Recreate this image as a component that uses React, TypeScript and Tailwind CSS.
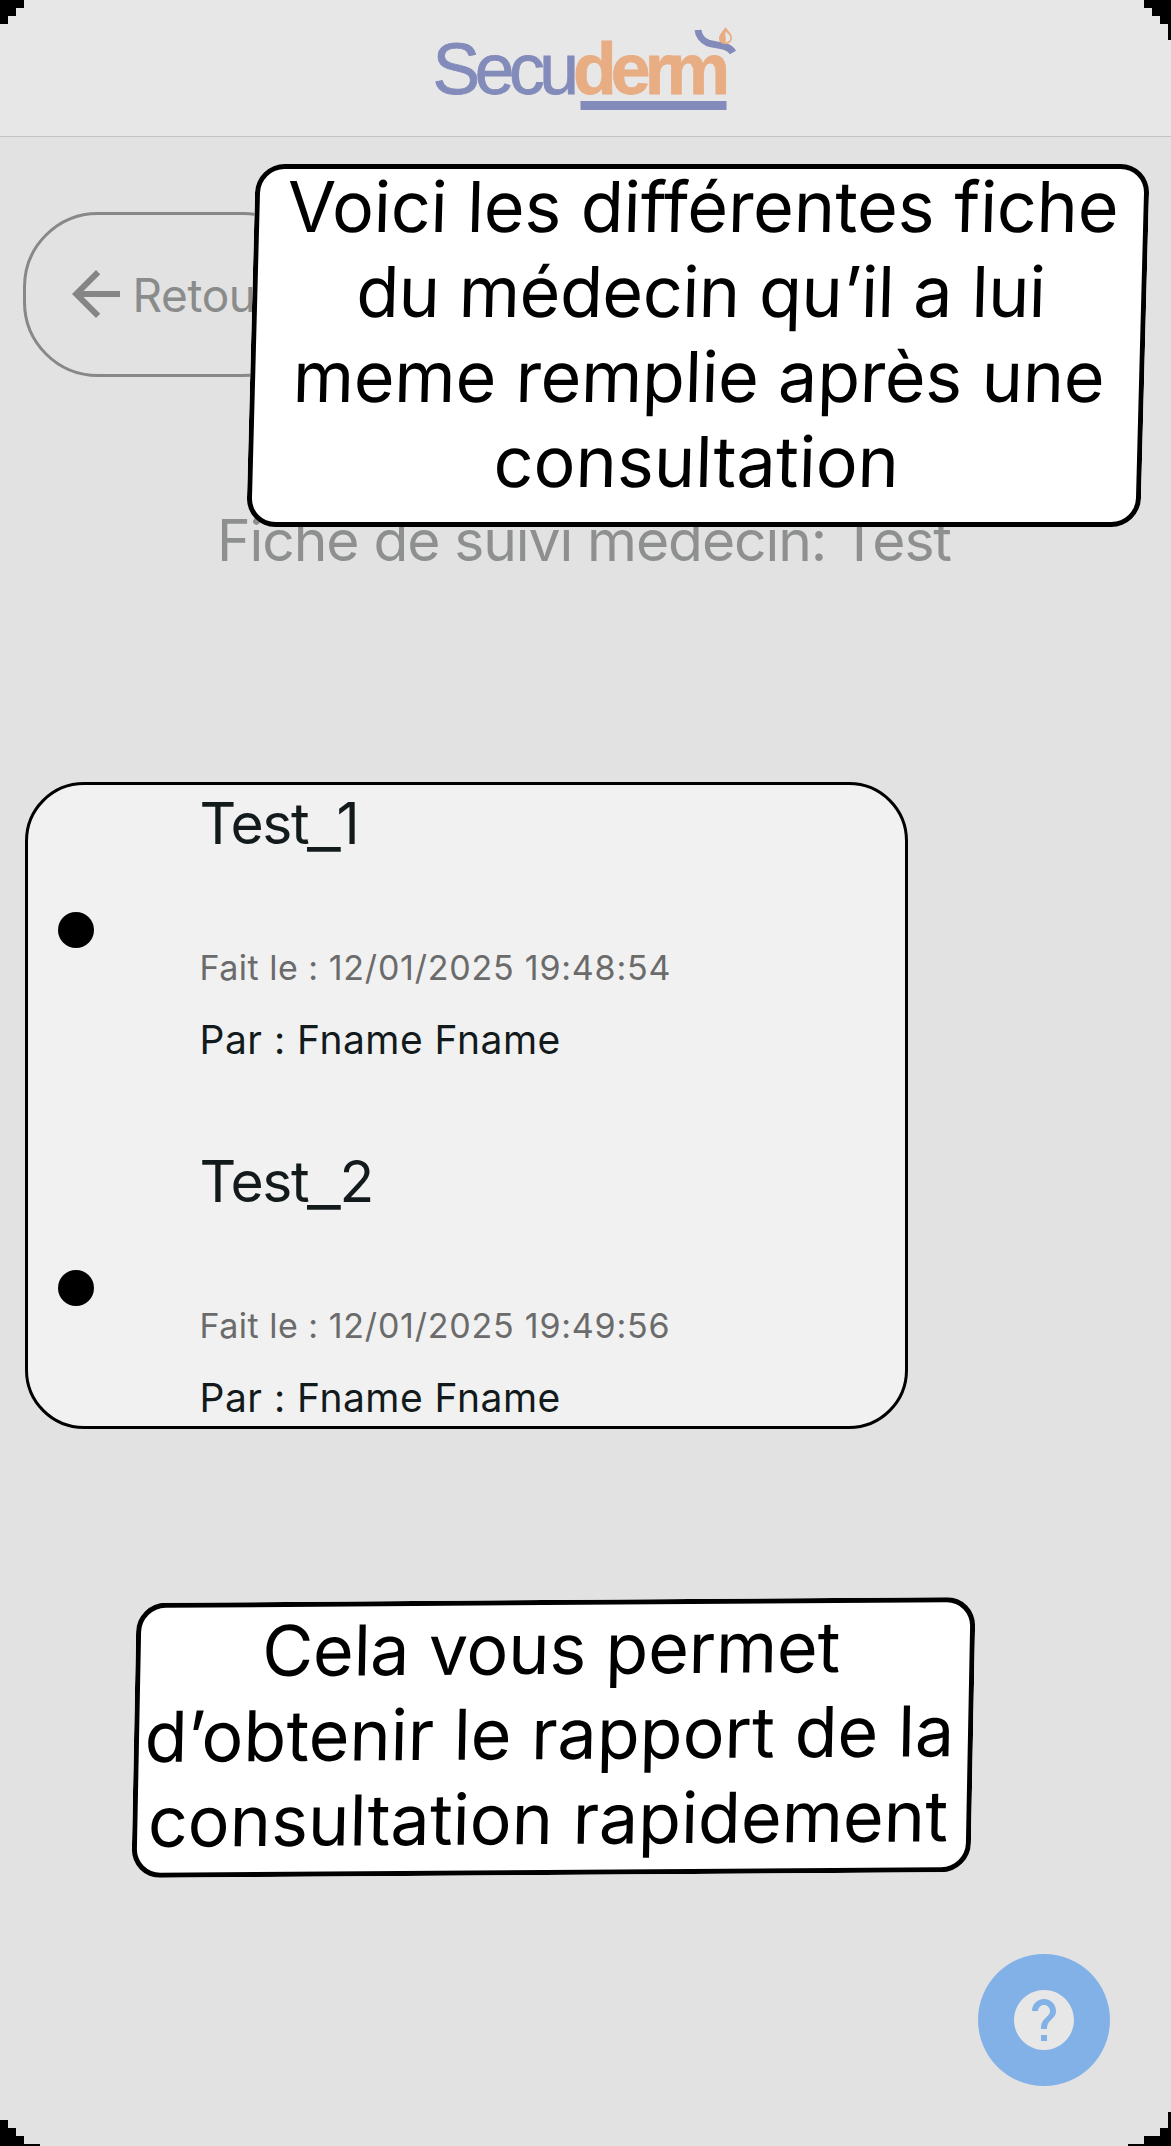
import { MdArrowBack, MdHelp } from "react-icons/md";

type Report = { id: number; idClass: string; date: string; author: string };

const reports: Report[] = [
  { id: 1, idClass: "-ml-[3px]", date: "12/01/2025 19:48:54", author: "Fname Fname" },
  { id: 2, idClass: "ml-0", date: "12/01/2025 19:49:56", author: "Fname Fname" },
];

function Logo() {
  return (
    <svg viewBox="0 0 320 96" className="h-[96px] w-[320px]" role="img" aria-label="Secuderm">
      <g fontFamily="'Liberation Sans', Arial, sans-serif" fontSize="71.5">
        <text x="6.5" y="74.7" fill="#838bba" stroke="#838bba" strokeWidth="0.8" letterSpacing="-5.500">
          Secu
        </text>
        <text x="147" y="74.7" fill="#e8ad83" stroke="#e8ad83" strokeWidth="0.8" fontWeight="700" letterSpacing="-5.900">
          derm
        </text>
      </g>
      <rect x="154.500" y="82" width="146" height="9" fill="#838bba" />
      <path
        d="M272 11C272.500 16 276 21.500 282 24C290 27 302 25 307 33.500"
        fill="none"
        stroke="#838bba"
        strokeWidth="7"
      />
      <path
        d="M299.500 8C296.500 13 292.700 15.500 293 20C293.300 24 297 25 299.500 25C304 25 306 22 306 18.500C306 15 302 12 299.500 8Z"
        fill="#e8ad83"
      />
      <path d="M300 12.500C298 17 301 18 299.500 23.500C303 23 304.500 21 304.300 18.500C304 16 301.500 14.500 300 12.500Z" fill="#e7e7e7" />
    </svg>
  );
}

function ReportItem({ report }: { report: Report }) {
  return (
    <li className="flex h-[279px] items-start">
      <span className="mt-[127px] ml-[30px] size-9 shrink-0 rounded-full bg-black" />
      <div className="ml-[105.500px] whitespace-nowrap text-[#131a1c]">
        <h2 className="mt-[5px] flex h-[68px] text-[57px] leading-[68px]">
          <span className="w-[107px] tracking-[-1.4px]">Test</span>
          <span className="mt-[3px] w-[33px] origin-left scale-x-[1.3]">_</span>
          <span className={report.idClass}>{report.id}</span>
        </h2>
        <p className="mt-[89px] text-[34px] leading-[42px] tracking-[0.78px] text-[#6b6b6b]">
          <span className="tracking-[0.5px]">Fait le : </span>
          {report.date}
        </p>
        <p className="mt-[27px] text-[39px] leading-[48px] tracking-[0.48px]">Par : {report.author}</p>
      </div>
    </li>
  );
}

/* Stepped black corners around the screen */
function Corners() {
  return (
    <svg
      viewBox="0 0 1171 2146"
      className="pointer-events-none absolute inset-0 h-[2146px] w-[1171px]"
      shapeRendering="crispEdges"
      aria-hidden="true"
    >
      <path d="M0 0H24V8H16V16H8V24H0Z" />
      <path d="M1171 0H1144V8H1152V16H1160V24H1168V40H1171Z" />
      <path d="M0 2120H8V2128H16V2136H24V2144H40V2146H0Z" />
      <path d="M1171 2112H1168V2128H1160V2136H1144V2144H1128V2146H1171Z" />
    </svg>
  );
}

export default function App() {
  return (
    <div className="relative h-[2146px] w-[1171px] overflow-hidden bg-[#e2e2e2] font-['Inter',sans-serif]">
      <header className="flex h-[137px] justify-center border-b border-[#c4c4c4] bg-[#e7e7e7] pt-[19px]">
        <Logo />
      </header>

      <main className="flex flex-col items-start pt-[75px]">
        <button className="ml-[23px] flex h-[165px] w-[295px] items-center rounded-[75px] border-[3px] border-[#888888] pl-[33.500px] text-[#8a8b8b]">
          <MdArrowBack className="mb-px size-[72px] shrink-0 text-[#858585]" />
          <span className="ml-px text-[46px] leading-[56px] tracking-[-0.4px]">Retour</span>
        </button>

        <h1 className="mt-[129px] ml-[217px] text-[57px] leading-[69px] tracking-[-1.100px] whitespace-nowrap text-[#8e8f8f]">
          Fiche de suivi médecin: Test
        </h1>

        <ul className="mt-[207px] ml-[25px] flex h-[647px] w-[883px] flex-col gap-[79px] rounded-[59px] border-[3px] border-black bg-[#f1f1f1]">
          {reports.map((report) => (
            <ReportItem key={report.id} report={report} />
          ))}
        </ul>
      </main>

      <div className="absolute top-[164px] left-[250.500px] flex h-[362.500px] w-[894px] [transform:matrix(1,0,-0.0262,1,0,0)] flex-col items-center rounded-[29px] bg-white pl-[3px] text-[70px] leading-[85px] whitespace-nowrap text-black shadow-[inset_0_0_0_5px_#000]">
        <span className="tracking-[-0.12px]">Voici les différentes fiche</span>
        <span className="tracking-[-0.45px]">du médecin qu’il a lui</span>
        <span className="tracking-[-0.24px]">meme remplie après une</span>
        <span>consultation</span>
      </div>

      <div className="absolute top-[1600px] left-[133.500px] flex h-[275px] w-[839px] [transform:matrix(1,-0.0071,-0.0192,1,0,0)] flex-col items-center rounded-[29px] bg-white pt-[6px] pr-[8px] text-[70px] leading-[85px] whitespace-nowrap text-black shadow-[inset_0_0_0_5px_#000]">
        <span className="tracking-[-0.25px]">Cela vous permet</span>
        <span>d’obtenir le rapport de la</span>
        <span className="tracking-[-0.02px]">consultation rapidement</span>
      </div>

      <button
        aria-label="Aide"
        className="absolute top-[1954px] left-[978px] flex size-[132px] items-center justify-center rounded-full bg-[#82b1e7] text-[#e7e7e7]"
      >
        <MdHelp className="size-[72px]" />
      </button>

      <Corners />
    </div>
  );
}
